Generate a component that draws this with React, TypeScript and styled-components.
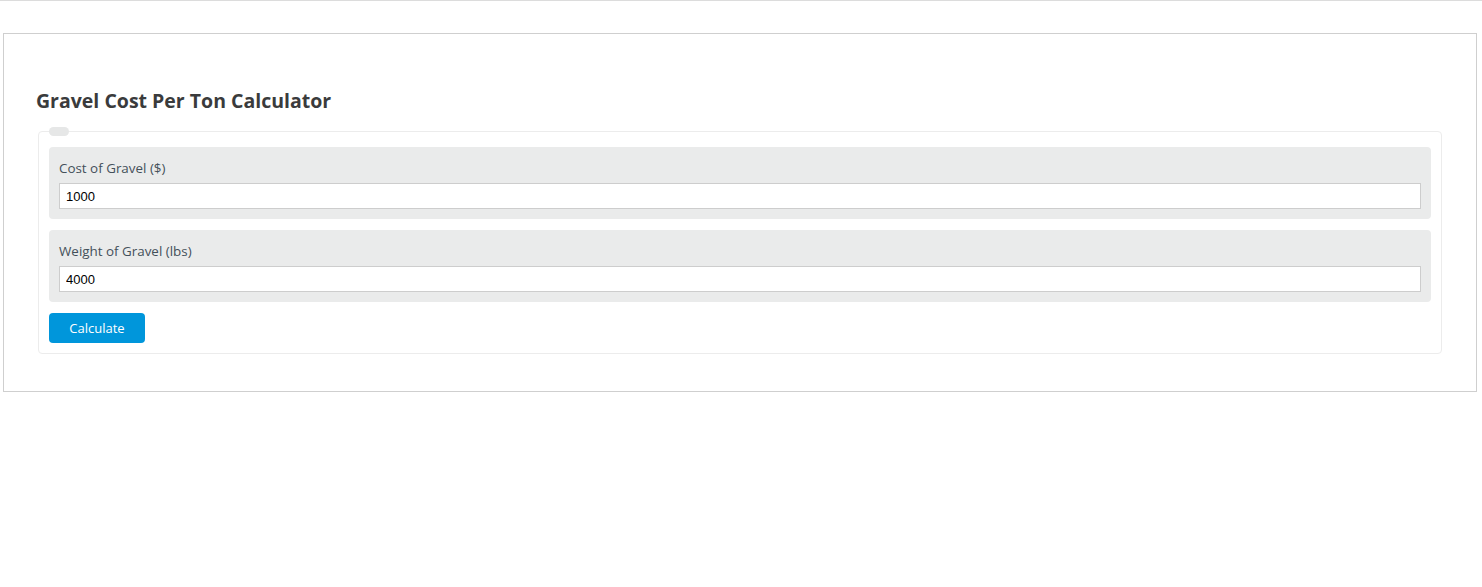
import React from 'react'
import styled, { createGlobalStyle } from 'styled-components'

const GlobalStyle = createGlobalStyle`
  html, body {
    margin: 0;
    padding: 0;
    background: #fff;
  }
  body {
    font-family: "Open Sans", "Noto Sans", Arial, sans-serif;
  }
`

const TopRule = styled.div`
  height: 0;
  border-bottom: 1px solid #dcdcdc;
`

const Page = styled.div`
  padding: 32px 5px 0 3px;
`

const Card = styled.section`
  border: 1px solid #cfcfcf;
  padding: 53px 34px 37px 32px;
`

const Title = styled.h2`
  margin: 0 0 16px;
  font-size: 19.5px;
  line-height: 28px;
  font-weight: 700;
  color: #3a3b3c;
`

const Form = styled.div`
  position: relative;
  margin-left: 2px;
  border: 1px solid #ececec;
  border-radius: 4px;
  padding: 15px 10px 10px;
  display: flex;
  flex-direction: column;
  gap: 11px;
`

const Legend = styled.span`
  position: absolute;
  top: -5px;
  left: 10px;
  width: 20px;
  height: 9px;
  border-radius: 5px;
  background: #e6e7e7;
`

const Field = styled.div`
  background: #eaebeb;
  border-radius: 4px;
  padding: 11px 10px 10px;
  display: flex;
  flex-direction: column;
  gap: 5px;
`

const Label = styled.label`
  font-size: 13.4px;
  line-height: 20px;
  color: #44505a;
`

const Input = styled.input`
  box-sizing: border-box;
  height: 26px;
  width: 100%;
  margin: 0;
  padding: 0 6px;
  border: 1px solid #cdcdcd;
  background: #fff;
  font-family: "Liberation Sans", Arial, sans-serif;
  font-size: 13px;
  color: #000;
  outline: none;
`

const Button = styled.button`
  align-self: flex-start;
  width: 96px;
  height: 30px;
  border: none;
  border-radius: 4px;
  background: #0096db;
  color: #fff;
  font-family: "Open Sans", "Noto Sans", Arial, sans-serif;
  font-size: 13px;
  cursor: pointer;
`

const fields = [
  { label: 'Cost of Gravel ($)', value: '1000' },
  { label: 'Weight of Gravel (lbs)', value: '4000' },
]

export default function App() {
  return (
    <>
      <GlobalStyle />
      <TopRule />
      <Page>
        <Card>
          <Title>Gravel Cost Per Ton Calculator</Title>
          <Form>
            <Legend />
            {fields.map((f) => (
              <Field key={f.label}>
                <Label>{f.label}</Label>
                <Input defaultValue={f.value} />
              </Field>
            ))}
            <Button>Calculate</Button>
          </Form>
        </Card>
      </Page>
    </>
  )
}
